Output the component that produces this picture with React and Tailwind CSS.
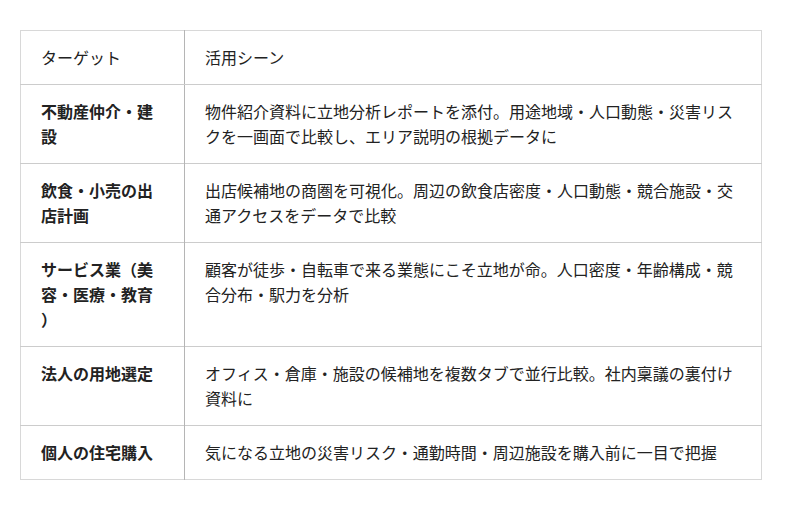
const rows = [
  {
    target: '不動産仲介・建設',
    scene: '物件紹介資料に立地分析レポートを添付。用途地域・人口動態・災害リスクを一画面で比較し、エリア説明の根拠データに',
  },
  {
    target: '飲食・小売の出店計画',
    scene: '出店候補地の商圏を可視化。周辺の飲食店密度・人口動態・競合施設・交通アクセスをデータで比較',
  },
  {
    target: 'サービス業（美容・医療・教育）',
    scene: '顧客が徒歩・自転車で来る業態にこそ立地が命。人口密度・年齢構成・競合分布・駅力を分析',
  },
  {
    target: '法人の用地選定',
    scene: 'オフィス・倉庫・施設の候補地を複数タブで並行比較。社内稟議の裏付け資料に',
  },
  {
    target: '個人の住宅購入',
    scene: '気になる立地の災害リスク・通勤時間・周辺施設を購入前に一目で把握',
  },
];

export default function App() {
  return (
    <div
      className="min-h-[510px] bg-white pt-[30px] px-5 text-[16px] leading-[25px] text-[#222] [text-spacing-trim:space-all]"
      style={{ fontFamily: '"Noto Sans CJK JP", "Noto Sans", sans-serif' }}
    >
      <table className="w-[742px] border-collapse border border-[#d8d8d8] text-left">
        <thead>
          <tr>
            <th className="w-[164px] border-r border-[#b5b5b5] border-b border-b-[#cccccc] px-5 py-[14px] font-normal align-top [line-break:anywhere]">
              ターゲット
            </th>
            <th className="border-b border-[#cccccc] px-5 py-[14px] font-normal align-top">
              活用シーン
            </th>
          </tr>
        </thead>
        <tbody>
          {rows.map((r, i) => (
            <tr key={i} className="border-b border-[#cccccc] last:border-b-[#d8d8d8]">
              <td className="border-r border-[#b5b5b5] px-5 py-[14px] font-bold align-top [line-break:anywhere]">
                {r.target}
              </td>
              <td className="px-5 py-[14px] align-top">{r.scene}</td>
            </tr>
          ))}
        </tbody>
      </table>
    </div>
  );
}
